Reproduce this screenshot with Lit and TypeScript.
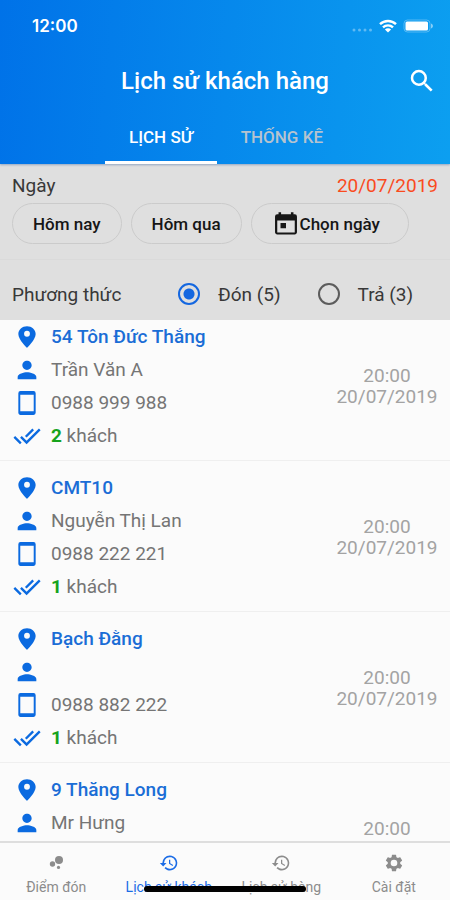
import { LitElement, html, css, svg, nothing } from "lit";
import { customElement, state } from "lit/decorators.js";
import { classMap } from "lit/directives/class-map.js";

interface Trip {
  place: string;
  name?: string;
  phone?: string;
  guests?: number;
  time: string;
  date?: string;
}

const TRIPS: Trip[] = [
  { place: "54 Tôn Đức Thắng", name: "Trần Văn A", phone: "0988 999 988", guests: 2, time: "20:00", date: "20/07/2019" },
  { place: "CMT10", name: "Nguyễn Thị Lan", phone: "0988 222 221", guests: 1, time: "20:00", date: "20/07/2019" },
  { place: "Bạch Đằng", phone: "0988 882 222", guests: 1, time: "20:00", date: "20/07/2019" },
  { place: "9 Thăng Long", name: "Mr Hưng", time: "20:00" },
];

const icon = (size: number, body: unknown, box = "0 0 24 24") =>
  html`<svg width=${size} height=${size} viewBox=${box} fill="currentColor" aria-hidden="true">${body}</svg>`;

const searchIcon = svg`<path d="M15.5 14h-.79l-.28-.27A6.47 6.47 0 0 0 16 9.5 6.5 6.5 0 1 0 9.5 16c1.61 0 3.09-.59 4.23-1.57l.27.28v.79l5 4.99L20.49 19l-4.99-5zm-6 0a4.5 4.5 0 1 1 0-9 4.5 4.5 0 0 1 0 9z"/>`;
const pinIcon = svg`<path d="M12 2C7.6 2 4 5.1 4 9.2 4 14.5 12 22 12 22s8-7.5 8-12.8C20 5.1 16.4 2 12 2zm0 9.7a2.7 2.7 0 1 1 0-5.4 2.7 2.7 0 0 1 0 5.4z"/>`;
const personIcon = svg`<path d="M12 12c2.21 0 4-1.79 4-4s-1.79-4-4-4-4 1.79-4 4 1.79 4 4 4zm0 2c-2.67 0-8 1.34-8 4v2h16v-2c0-2.66-5.33-4-8-4z"/>`;
const phoneIcon = svg`<path d="M18 1H6a2 2 0 0 0-2 2v18c0 1.1.9 2 2 2h12a2 2 0 0 0 2-2V3a2 2 0 0 0-2-2zm.2 18.6H5.8V4.4h12.4z"/>`;
const doneIcon = svg`<path d="M18 7l-1.41-1.41-6.34 6.34 1.41 1.41L18 7zm4.24-1.41L11.66 16.17 7.48 12l-1.41 1.41L11.66 19l12-12-1.42-1.41zM.41 13.41L6 19l1.41-1.41L1.83 12 .41 13.41z"/>`;
const calendarIcon = svg`<path d="M19.5 3.6H18.4V2h-2.2v1.6H7.8V2H5.6v1.6H4.5A1.9 1.9 0 0 0 2.6 5.5v13.6c0 1 .9 1.9 1.9 1.9h15c1 0 1.9-.9 1.9-1.9V5.500a1.900 1.900 0 0 0-1.900-1.900zM19.500 19.200h-15V9h15zM7.300 11.200h4.700v4.400H7.300z"/>`;
const dotsIcon = svg`<circle cx="15.600" cy="8.400" r="4.800"/><circle cx="7.800" cy="13.200" r="3.200"/><circle cx="15" cy="17.300" r="1.900"/>`;
const historyIcon = svg`<path d="M13 3a9 9 0 0 0-9 9H1l4 4.2L9 12H6a7 7 0 1 1 2 4.9l-1.4 1.5A9 9 0 1 0 13 3zm-1 5v5l4.3 2.5.7-1.2-3.500-2.100V8z"/>`;
const gearIcon = svg`<path d="M19.43 12.98c.04-.32.07-.64.07-.98s-.03-.66-.07-.98l2.11-1.65c.19-.15.24-.42.12-.64l-2-3.46c-.12-.22-.39-.3-.61-.22l-2.49 1c-.52-.4-1.08-.73-1.69-.98l-.38-2.65A.49.49 0 0 0 14 2h-4c-.25 0-.46.18-.49.42l-.38 2.65c-.61.25-1.17.59-1.69.98l-2.49-1c-.23-.09-.49 0-.61.22l-2 3.46c-.13.22-.07.49.12.64l2.11 1.65c-.04.32-.07.65-.07.98s.03.66.07.98l-2.11 1.65c-.19.15-.24.42-.12.64l2 3.46c.12.22.39.3.61.22l2.49-1c.52.4 1.08.73 1.69.98l.38 2.65c.03.24.24.42.49.42h4c.25 0 .46-.18.49-.42l.38-2.65c.61-.25 1.17-.59 1.69-.98l2.49 1c.23.09.49 0 .61-.22l2-3.46c.12-.22.07-.49-.12-.64l-2.11-1.65zM12 16a4 4 0 1 1 0-8 4 4 0 0 1 0 8z"/>`;

@customElement("trip-item")
export class TripItem extends LitElement {
  static properties = { trip: { attribute: false } };
  declare trip: Trip;

  static styles = css`
    :host {
      display: flex;
      align-items: center;
      justify-content: space-between;
      padding: 10px 12px 8px;
      border-bottom: 1px solid #efefef;
      color: #757575;
      font-size: 19px;
    }
    .row {
      display: grid;
      grid-template-columns: 30px auto;
      gap: 9px;
      align-items: center;
      height: 33px;
    }
    .icon {
      display: flex;
      justify-content: center;
      color: #0b6ae0;
    }
    .place {
      color: #1a6dd6;
      font-weight: 500;
    }
    .count {
      color: #16a31c;
      font-weight: 700;
    }
    .when {
      min-height: 42px;
      line-height: 21px;
      text-align: center;
      color: #a3a3a3;
      width: 102px;
    }
  `;

  private row(glyph: unknown, size: number, text: unknown) {
    return html`<div class="row"><span class="icon">${icon(size, glyph)}</span><span>${text}</span></div>`;
  }

  render() {
    const t = this.trip;
    if (!t) return nothing;
    return html`
      <div>
        ${this.row(pinIcon, 26, html`<span class="place">${t.place}</span>`)}
        ${this.row(personIcon, 28, t.name ?? nothing)}
        ${this.row(phoneIcon, 26, t.phone ?? nothing)}
        ${this.row(doneIcon, 28, t.guests ? html`<span class="count">${t.guests}</span> khách` : nothing)}
      </div>
      <div class="when">${t.time}<br />${t.date ?? nothing}</div>
    `;
  }
}

@customElement("app-root")
export class AppRoot extends LitElement {
  @state() private tab = "history";
  @state() private method = "pickup";

  static styles = css`
    :host {
      display: flex;
      flex-direction: column;
      height: 100vh;
      overflow: hidden;
      background: #fbfbfb;
      font-family: Roboto, "Noto Sans", sans-serif;
    }
    button {
      border: 0;
      background: none;
      padding: 0;
      font-family: inherit;
      cursor: pointer;
    }
    .header {
      flex: none;
      color: #fff;
      background: linear-gradient(95deg, #0072e8, #0c9ff0);
      box-shadow: 0 1px 2px rgba(0, 60, 140, 0.35);
      z-index: 1;
    }
    .status {
      display: flex;
      align-items: center;
      justify-content: space-between;
      height: 52px;
      padding: 0 16px 0 32px;
      font-family: Inter, Roboto, sans-serif;
      font-size: 17px;
      font-weight: 600;
    }
    .signals {
      display: flex;
      align-items: center;
      gap: 6px;
    }
    .titlebar {
      display: grid;
      grid-template-columns: 40px 1fr 40px;
      align-items: center;
      height: 58px;
      padding: 0 8px;
    }
    .title {
      margin: 0;
      grid-column: 2;
      text-align: center;
      font-size: 24px;
      font-weight: 500;
    }
    .search {
      display: flex;
      justify-content: center;
      color: #fff;
    }
    .tabs {
      display: flex;
      justify-content: center;
      padding-left: 2px;
    }
    .tab {
      height: 54px;
      padding: 3px 24px 0;
      border-bottom: 3px solid transparent;
      color: #b6c3cf;
      font-size: 17px;
      font-weight: 500;
    }
    .tab.on {
      color: #fff;
      border-bottom-color: #fff;
    }
    .filters {
      flex: none;
      background: #dfdfdf;
      color: #383838;
      font-size: 19px;
    }
    .day {
      padding: 12px 12px 15px;
      border-bottom: 1px solid #dadada;
    }
    .dayline {
      display: flex;
      justify-content: space-between;
      line-height: 20px;
    }
    .date {
      color: #fa4b1e;
    }
    .chips {
      display: flex;
      gap: 9px;
      margin-top: 7px;
    }
    .chip {
      display: flex;
      align-items: center;
      justify-content: center;
      height: 41px;
      padding: 0 20px;
      border: 1px solid #cbcbcb;
      border-radius: 21px;
      color: #161616;
      font-size: 17px;
      font-weight: 500;
    }
    .chip.pick {
      padding: 0 28px 0 20px;
    }
    .method {
      display: flex;
      align-items: center;
      height: 60px;
      padding: 8px 12px 0;
      box-sizing: border-box;
    }
    .name {
      flex: none;
      width: 166px;
    }
    .option {
      display: flex;
      align-items: center;
      gap: 18px;
      margin-right: 37px;
    }
    .option:last-child {
      margin-right: 0;
    }
    .option input {
      appearance: none;
      width: 22px;
      height: 22px;
      margin: 0;
      border: 2px solid #5c5c5c;
      border-radius: 50%;
    }
    .option input:checked {
      border-color: #1467e0;
      background: radial-gradient(circle, #1467e0 5px, transparent 6px);
    }
    .list {
      flex: 1;
      min-height: 0;
      overflow: hidden;
    }
    .items {
      margin: -10px 0 0;
      padding: 0;
      list-style: none;
    }
    .nav {
      position: relative;
      flex: none;
      display: grid;
      grid-template-columns: repeat(4, 1fr);
      height: 57px;
      border-top: 2px solid #dedede;
      background: #fbfbfb;
    }
    .link {
      display: flex;
      flex-direction: column;
      align-items: center;
      gap: 5px;
      padding-top: 10px;
      color: #8c8c8c;
      font-size: 14px;
      line-height: 18px;
      text-decoration: none;
      white-space: nowrap;
    }
    .link.on {
      color: #1b6ce6;
    }
    .home {
      position: absolute;
      left: 50%;
      bottom: 8px;
      width: 36%;
      height: 6px;
      border-radius: 3px;
      background: #000;
      transform: translateX(-50%);
    }
  `;

  private tabButton(id: string, label: string) {
    return html`<button
      role="tab"
      aria-selected=${this.tab === id}
      class=${classMap({ tab: true, on: this.tab === id })}
      @click=${() => (this.tab = id)}
    >${label}</button>`;
  }

  private option(id: string, label: string) {
    return html`<label class="option"
      ><input type="radio" name="method" .checked=${this.method === id} @change=${() => (this.method = id)} />${label}</label
    >`;
  }

  private link(glyph: unknown, label: string, on = false) {
    return html`<a href="#" class=${classMap({ link: true, on })}>${icon(20, glyph)}<span>${label}</span></a>`;
  }

  render() {
    return html`
      <header class="header">
        <div class="status">
          <span>12:00</span>
          <span class="signals">
            <svg width="22" height="14" viewBox="0 0 22 14" fill="#fff" opacity="0.35">
              <circle cx="3" cy="11" r="1.500" /><circle cx="8.500" cy="11" r="1.500" /><circle cx="14" cy="11" r="1.500" /><circle cx="19.500" cy="11" r="1.500" />
            </svg>
            <svg width="18" height="14" viewBox="0 0 18 14" fill="none" stroke="#fff" stroke-width="2.4">
              <path d="M1 5.2a11.5 11.5 0 0 1 16 0M4 8.400a7.200 7.200 0 0 1 10 0" />
              <path d="M9 13.600L5.900 10.600a4.400 4.400 0 0 1 6.200 0z" fill="#fff" stroke="none" />
            </svg>
            <svg width="31" height="14" viewBox="0 0 31 14">
              <rect x="1" y="1" width="26" height="12" rx="3.500" fill="none" stroke="#fff" stroke-opacity="0.3" />
              <rect x="2.500" y="2.500" width="22.500" height="9" rx="1.500" fill="#fff" />
              <path d="M28 4.500c2.600 1 2.600 4 0 5z" fill="#fff" fill-opacity="0.5" />
            </svg>
          </span>
        </div>
        <div class="titlebar">
          <h1 class="title">Lịch sử khách hàng</h1>
          <button class="search" aria-label="Tìm kiếm">${icon(30, searchIcon)}</button>
        </div>
        <div class="tabs" role="tablist">
          ${this.tabButton("history", "LỊCH SỬ")}${this.tabButton("stats", "THỐNG KÊ")}
        </div>
      </header>
      <section class="filters">
        <div class="day">
          <div class="dayline"><span>Ngày</span><span class="date">20/07/2019</span></div>
          <div class="chips">
            <button class="chip">Hôm nay</button>
            <button class="chip">Hôm qua</button>
            <button class="chip pick">${icon(28, calendarIcon)}Chọn ngày</button>
          </div>
        </div>
        <div class="method" role="radiogroup" aria-labelledby="method-name">
          <span class="name" id="method-name">Phương thức</span>
          ${this.option("pickup", "Đón (5)")}${this.option("dropoff", "Trả (3)")}
        </div>
      </section>
      <main class="list">
        <ul class="items">
          ${TRIPS.map((t) => html`<li><trip-item .trip=${t}></trip-item></li>`)}
        </ul>
      </main>
      <nav class="nav">
        ${this.link(dotsIcon, "Điểm đón")}${this.link(historyIcon, "Lịch sử khách", true)}
        ${this.link(historyIcon, "Lịch sử hàng")}${this.link(gearIcon, "Cài đặt")}
        <span class="home"></span>
      </nav>
    `;
  }
}
